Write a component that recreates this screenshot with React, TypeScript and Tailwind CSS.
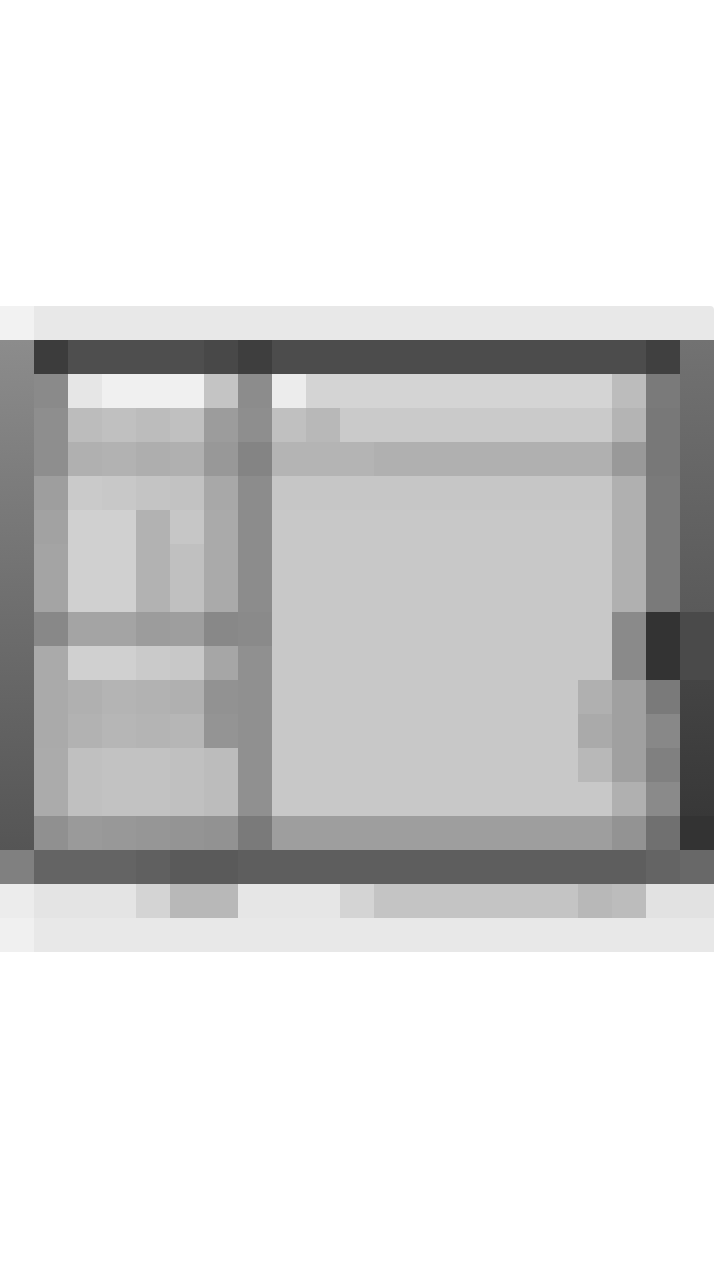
import React from 'react';

// The screen is a low-res capture of a desktop window: dark frame, title bar,
// left tool strip, sidebar list, main pane with scrollbar, taskbar and dock.
// Every block sits on a 34px grid.

function Cells({ cells, className = '' }: { cells: string[]; className?: string }) {
  return (
    <div className={`flex ${className}`}>
      {cells.map((c, i) => (
        <div key={i} className={`h-[34px] w-[34px] shrink-0 ${c}`} />
      ))}
    </div>
  );
}

function Column({ cells }: { cells: string[] }) {
  return (
    <div className="flex w-[34px] shrink-0 flex-col">
      {cells.map((c, i) => (
        <div key={i} className={`h-[34px] w-[34px] ${c}`} />
      ))}
    </div>
  );
}

const toolStrip = [
  'bg-[#8a8a8a]', 'bg-[#8e8e8e]', 'bg-[#8e8e8e]', 'bg-[#9e9e9e]', 'bg-[#a2a2a2]', 'bg-[#a4a4a4]', 'bg-[#a4a4a4]',
  'bg-[#888888]', 'bg-[#aaaaaa]', 'bg-[#aaaaaa]', 'bg-[#aaaaaa]', 'bg-[#ababab]', 'bg-[#ababab]', 'bg-[#909090]',
];

const sidebarRows = [
  ['bg-[#e6e6e6]', 'bg-[#f0f0f0]', 'bg-[#f0f0f0]', 'bg-[#f0f0f0]', 'bg-[#c4c4c4]'],
  ['bg-[#bcbcbc]', 'bg-[#c0c0c0]', 'bg-[#bcbcbc]', 'bg-[#c0c0c0]', 'bg-[#9c9c9c]'],
  ['bg-[#b0b0b0]', 'bg-[#b2b2b2]', 'bg-[#aeaeae]', 'bg-[#b0b0b0]', 'bg-[#989898]'],
  ['bg-[#cacaca]', 'bg-[#c8c8c8]', 'bg-[#c4c4c4]', 'bg-[#c2c2c2]', 'bg-[#a8a8a8]'],
  ['bg-[#d0d0d0]', 'bg-[#d0d0d0]', 'bg-[#b2b2b2]', 'bg-[#c6c6c6]', 'bg-[#aaaaaa]'],
  ['bg-[#d0d0d0]', 'bg-[#d0d0d0]', 'bg-[#b2b2b2]', 'bg-[#c0c0c0]', 'bg-[#aaaaaa]'],
  ['bg-[#d0d0d0]', 'bg-[#d0d0d0]', 'bg-[#b2b2b2]', 'bg-[#c0c0c0]', 'bg-[#aaaaaa]'],
  ['bg-[#a4a4a4]', 'bg-[#a4a4a4]', 'bg-[#9c9c9c]', 'bg-[#9e9e9e]', 'bg-[#888888]'],
  ['bg-[#d0d0d0]', 'bg-[#d0d0d0]', 'bg-[#cacaca]', 'bg-[#c8c8c8]', 'bg-[#a6a6a6]'],
  ['bg-[#b0b0b0]', 'bg-[#b4b4b4]', 'bg-[#b2b2b2]', 'bg-[#b0b0b0]', 'bg-[#929292]'],
  ['bg-[#b2b2b2]', 'bg-[#b6b6b6]', 'bg-[#b4b4b4]', 'bg-[#b6b6b6]', 'bg-[#949494]'],
  ['bg-[#c0c0c0]', 'bg-[#c2c2c2]', 'bg-[#c2c2c2]', 'bg-[#c0c0c0]', 'bg-[#bcbcbc]'],
  ['bg-[#c0c0c0]', 'bg-[#c2c2c2]', 'bg-[#c2c2c2]', 'bg-[#c0c0c0]', 'bg-[#bcbcbc]'],
  ['bg-[#9a9a9a]', 'bg-[#989898]', 'bg-[#969696]', 'bg-[#949494]', 'bg-[#929292]'],
];

const splitter = [
  'bg-[#8c8c8c]', 'bg-[#8e8e8e]', 'bg-[#848484]', 'bg-[#8c8c8c]', 'bg-[#8c8c8c]', 'bg-[#8c8c8c]', 'bg-[#8c8c8c]',
  'bg-[#8a8a8a]', 'bg-[#909090]', 'bg-[#909090]', 'bg-[#909090]', 'bg-[#909090]', 'bg-[#909090]', 'bg-[#7a7a7a]',
];

const paneEdge = [
  'bg-[#bcbcbc]', 'bg-[#b4b4b4]', 'bg-[#999999]', 'bg-[#b0b0b0]', 'bg-[#b0b0b0]', 'bg-[#b0b0b0]', 'bg-[#b0b0b0]',
  'bg-[#8a8a8a]', 'bg-[#8a8a8a]', 'bg-[#a0a0a0]', 'bg-[#a0a0a0]', 'bg-[#a0a0a0]', 'bg-[#b0b0b0]', 'bg-[#939393]',
];

const scrollbar = [
  'bg-[#7a7a7a]', 'bg-[#787878]', 'bg-[#787878]', 'bg-[#7a7a7a]', 'bg-[#7a7a7a]', 'bg-[#7a7a7a]', 'bg-[#7a7a7a]',
  'bg-[#333333]', 'bg-[#333333]', 'bg-[#7a7a7a]', 'bg-[#888888]', 'bg-[#808080]', 'bg-[#8a8a8a]', 'bg-[#707070]',
];

function MainPane() {
  return (
    <div className="flex w-[340px] shrink-0 flex-col">
      {/* header row */}
      <div className="flex h-[34px]">
        <div className="w-[34px] bg-[#ececec]" />
        <div className="flex-1 bg-[#d4d4d4]" />
      </div>
      {/* toolbar / breadcrumb */}
      <div className="flex h-[34px]">
        <div className="w-[34px] bg-[#c0c0c0]" />
        <div className="w-[34px] bg-[#b8b8b8]" />
        <div className="flex-1 bg-[#cacaca]" />
      </div>
      {/* column headers */}
      <div className="flex h-[34px]">
        <div className="w-[102px] bg-[#b4b4b4]" />
        <div className="flex-1 bg-[#b0b0b0]" />
      </div>
      <div className="h-[34px] bg-[#c6c6c6]" />
      {/* content body */}
      <div className="flex h-[306px] bg-[#c8c8c8]">
        <div className="flex-1" />
        <div className="flex w-[34px] flex-col">
          <div className="h-[170px]" />
          <div className="h-[34px] bg-[#b0b0b0]" />
          <div className="h-[34px] bg-[#aaaaaa]" />
          <div className="h-[34px] bg-[#b8b8b8]" />
        </div>
      </div>
      {/* status row */}
      <div className="h-[34px] bg-[#9e9e9e]" />
    </div>
  );
}

export default function App() {
  return (
    <div className="h-[1280px] w-[720px] overflow-hidden bg-white pt-[306px]">
      <div className="w-[714px]">
        {/* top strip */}
        <div className="flex h-[34px]">
          <div className="w-[34px] bg-[#f2f2f2]" />
          <div className="flex-1 rounded-tr-[4px] bg-[#e8e8e8]" />
        </div>

        <div className="flex h-[510px]">
          {/* left bezel */}
          <div className="w-[34px] bg-gradient-to-b from-[#8c8c8c] to-[#555555]" />

          {/* window */}
          <div className="flex w-[646px] flex-col">
            <div className="flex h-[34px]">
              <div className="w-[34px] bg-[#3c3c3c]" />
              <div className="w-[136px] bg-[#4e4e4e]" />
              <div className="w-[34px] bg-[#484848]" />
              <div className="w-[34px] bg-[#3e3e3e]" />
              <div className="w-[374px] bg-[#4c4c4c]" />
              <div className="w-[34px] bg-[#404040]" />
            </div>
            <div className="flex h-[476px]">
              <Column cells={toolStrip} />
              <div className="flex w-[170px] shrink-0 flex-col">
                {sidebarRows.map((row, i) => (
                  <Cells key={i} cells={row} />
                ))}
              </div>
              <Column cells={splitter} />
              <MainPane />
              <Column cells={paneEdge} />
              <Column cells={scrollbar} />
            </div>
          </div>

          {/* right bezel */}
          <div className="flex w-[34px] flex-col">
            <div className="h-[272px] bg-gradient-to-b from-[#727272] to-[#5a5a5a]" />
            <div className="h-[68px] bg-[#4a4a4a]" />
            <div className="h-[136px] bg-gradient-to-b from-[#444444] to-[#383838]" />
            <div className="h-[34px] bg-[#333333]" />
          </div>
        </div>

        {/* taskbar */}
        <div className="flex h-[34px]">
          <div className="w-[34px] bg-[#808080]" />
          <div className="w-[102px] bg-[#646464]" />
          <div className="w-[34px] bg-[#606060]" />
          <div className="w-[68px] bg-[#5a5a5a]" />
          <div className="w-[408px] bg-[#5e5e5e]" />
          <div className="w-[34px] bg-[#646464]" />
          <div className="w-[34px] bg-[#686868]" />
        </div>

        {/* dock */}
        <div className="flex h-[34px]">
          <div className="w-[34px] bg-[#ececec]" />
          <div className="w-[102px] bg-[#e4e4e4]" />
          <div className="w-[34px] bg-[#d4d4d4]" />
          <div className="w-[68px] bg-[#b8b8b8]" />
          <div className="w-[102px] bg-[#e6e6e6]" />
          <div className="w-[34px] bg-[#d4d4d4]" />
          <div className="w-[204px] bg-[#c4c4c4]" />
          <div className="w-[34px] bg-[#b8b8b8]" />
          <div className="w-[34px] bg-[#bcbcbc]" />
          <div className="w-[68px] bg-[#e2e2e2]" />
        </div>

        <div className="flex h-[34px]">
          <div className="w-[34px] bg-[#f0f0f0]" />
          <div className="flex-1 bg-[#e8e8e8]" />
        </div>
      </div>
    </div>
  );
}
